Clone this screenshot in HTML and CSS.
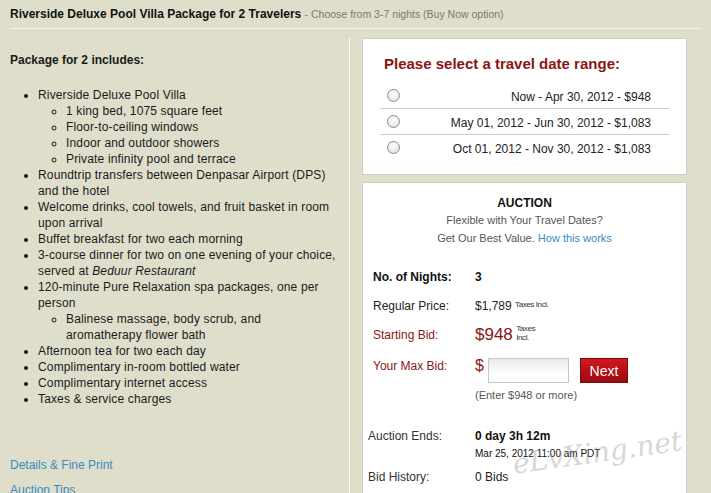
FILE: index.html
```html
<!DOCTYPE html>
<html lang="en">
<head>
    <meta charset="UTF-8">
    <meta name="viewport" content="width=device-width, initial-scale=1.0">
    <title>Riverside Deluxe Pool Villa Package</title>
    <link rel="stylesheet" href="styles.css">
</head>
<body>
    <div class="header">
        <span class="header-title">Riverside Deluxe Pool Villa Package for 2 Travelers</span>
        <span class="header-sub">- Choose from 3-7 nights (Buy Now option)</span>
    </div>

    <div class="main">
        <!-- Package contents -->
        <div class="left-col">
            <h2 class="pkg-title">Package for 2 includes:</h2>
            <ul class="pkg-list">
                <li>Riverside Deluxe Pool Villa
                    <ul>
                        <li>1 king bed, 1075 square feet</li>
                        <li>Floor-to-ceiling windows</li>
                        <li>Indoor and outdoor showers</li>
                        <li>Private infinity pool and terrace</li>
                    </ul>
                </li>
                <li>Roundtrip transfers between Denpasar Airport (DPS) and the hotel</li>
                <li>Welcome drinks, cool towels, and fruit basket in room upon arrival</li>
                <li>Buffet breakfast for two each morning</li>
                <li>3-course dinner for two on one evening of your choice, served at <em>Beduur Restaurant</em></li>
                <li>120-minute Pure Relaxation spa packages, one per person
                    <ul>
                        <li>Balinese massage, body scrub, and aromatherapy flower bath</li>
                    </ul>
                </li>
                <li>Afternoon tea for two each day</li>
                <li>Complimentary in-room bottled water</li>
                <li>Complimentary internet access</li>
                <li>Taxes &amp; service charges</li>
            </ul>

            <a class="side-link first" href="#">Details &amp; Fine Print</a>
            <a class="side-link" href="#">Auction Tips</a>
        </div>

        <div class="right-col">
            <!-- Date ranges (Buy Now) -->
            <div class="box date-box">
                <h3 class="date-title">Please select a travel date range:</h3>
                <label class="date-row">
                    <input type="radio" name="range" class="radio">
                    <span>Now - Apr 30, 2012 - $948</span>
                </label>
                <label class="date-row">
                    <input type="radio" name="range" class="radio">
                    <span>May 01, 2012 - Jun 30, 2012 - $1,083</span>
                </label>
                <label class="date-row">
                    <input type="radio" name="range" class="radio">
                    <span>Oct 01, 2012 - Nov 30, 2012 - $1,083</span>
                </label>
            </div>

            <!-- Auction -->
            <div class="box auction-box">
                <div class="auction-head">AUCTION</div>
                <div class="auction-sub">Flexible with Your Travel Dates?</div>
                <div class="auction-sub">Get Our Best Value. <a href="#">How this works</a></div>

                <div class="field first">
                    <span class="label strong">No. of Nights:</span>
                    <span class="value strong">3</span>
                </div>
                <div class="field">
                    <span class="label">Regular Price:</span>
                    <span class="value">$1,789 <span class="tax">Taxes Incl.</span></span>
                </div>
                <div class="field red">
                    <span class="label">Starting Bid:</span>
                    <span class="value"><span class="big">$948</span> <span class="tax stacked">Taxes<br>Incl.</span></span>
                </div>
                <div class="bid-row red">
                    <span class="label">Your Max Bid:</span>
                    <span class="dollar">$</span>
                    <input type="text" class="bid-input">
                    <button class="next-btn">Next</button>
                </div>
                <div class="hint">(Enter $948 or more)</div>

                <div class="info first">
                    <span class="label">Auction Ends:</span>
                    <span class="value strong">0 day 3h 12m</span>
                </div>
                <div class="ends-date">Mar 25, 2012 11:00 am PDT</div>
                <div class="info bids">
                    <span class="label">Bid History:</span>
                    <span class="value">0 Bids</span>
                </div>
            </div>
        </div>
    </div>

    <div class="watermark">eLvXing.net</div>
</body>
</html>
```

FILE: styles.css
```css
html {
    overflow: hidden;
}

body {
    margin: 0;
    background: #dfdecb;
    font-family: "Liberation Sans", Arial, sans-serif;
    font-size: 12px;
    color: #1a1a1a;
    height: 493px;
    position: relative;
}

a {
    color: #3a8cc0;
    text-decoration: none;
}

/* Top title bar */
.header {
    margin: 0 11px 0 10px;
    padding: 6px 0;
    line-height: 16px;
    border-bottom: 1px solid #f4f3ea;
}

.header-title {
    font-weight: bold;
    color: #111;
}

.header-sub {
    font-size: 10.5px;
    color: #7a7a72;
}

.main {
    display: grid;
    grid-template-columns: 350px 1fr;
    margin-top: 9px;
}

/* Left column: package list */
.left-col {
    border-right: 1px solid #ffffff;
    padding: 14px 12px 0 10px;
    line-height: 16px;
}

.pkg-title {
    font-size: 12px;
    margin: 0;
    line-height: 16px;
}

.pkg-list {
    margin: 19px 0 0;
    padding-left: 28px;
    letter-spacing: 0.15px;
}

.pkg-list ul {
    margin: 0;
    padding-left: 28px;
    list-style: circle;
}

.side-link {
    display: block;
    font-size: 12px;
    margin-top: 9px;
}

.side-link.first {
    margin-top: 50px;
}

/* Right column boxes */
.right-col {
    padding-left: 12px;
    width: 325px;
}

.box {
    background: #ffffff;
    border: 1px solid #cfcfc5;
}

.date-box {
    padding: 16px 17px 14px;
}

.date-title {
    margin: 0 0 10px 4px;
    font-size: 15px;
    line-height: 18px;
    color: #8a1515;
}

.date-row {
    display: flex;
    align-items: center;
    justify-content: space-between;
    height: 25px;
    padding: 0 18px 0 7px;
    border-bottom: 1px solid #cdcdcd;
    font-size: 12px;
    color: #222;
}

.date-row:last-child {
    border-bottom: none;
}

.date-row span {
    padding-top: 2px;
}

.radio {
    -webkit-appearance: none;
    appearance: none;
    width: 13px;
    height: 13px;
    margin: 0;
    border: 1px solid #8c8c8c;
    border-radius: 50%;
    background: radial-gradient(circle at 50% 35%, #ffffff, #dcdcdc);
}

.auction-box {
    margin-top: 7px;
    padding: 12px 0 40px;
    color: #222;
}

.auction-head {
    text-align: center;
    font-weight: bold;
    line-height: 16px;
    color: #111;
}

.auction-sub {
    text-align: center;
    font-size: 11px;
    line-height: 18px;
    color: #555;
}

.field {
    display: flex;
    align-items: center;
    height: 29px;
    padding-left: 10px;
}

.field.first {
    margin-top: 15px;
}

.label {
    width: 102px;
    flex-shrink: 0;
}

.strong {
    font-weight: bold;
    color: #111;
}

.red {
    color: #8a1515;
}

.tax {
    font-size: 8px;
    letter-spacing: -0.4px;
    color: #333;
    display: inline-block;
    vertical-align: 3px;
    line-height: 9px;
}

.tax.stacked {
    vertical-align: 0;
}

.big {
    font-size: 17px;
}

.bid-row {
    display: flex;
    align-items: flex-start;
    margin-top: 9px;
    padding-left: 10px;
    line-height: 16px;
}

.dollar {
    font-size: 16px;
    width: 13px;
}

.bid-input {
    width: 81px;
    height: 25px;
    box-sizing: border-box;
    border: 1px solid #c8c8c8;
    background: linear-gradient(#e9e9e9, #ffffff 70%);
    margin: 0;
}

.next-btn {
    margin-left: 11px;
    width: 48px;
    height: 25px;
    border: 1px solid #7c0a0d;
    background: linear-gradient(#d3161d, #990a0f);
    color: #ffffff;
    font-family: "Liberation Sans", Arial, sans-serif;
    font-size: 14px;
    padding: 0;
}

.hint {
    margin: 4px 0 0 112px;
    font-size: 11px;
    line-height: 16px;
    color: #555;
}

.info {
    display: flex;
    line-height: 16px;
    padding-left: 5px;
}

.info .label {
    width: 107px;
    color: #333;
}

.info.first {
    margin-top: 25px;
}

.ends-date {
    margin: 3px 0 0 112px;
    font-size: 10px;
    line-height: 14px;
    color: #111;
}

.info.bids {
    margin-top: 8px;
}

/* Watermark over the bottom right corner */
.watermark {
    position: absolute;
    left: 512px;
    top: 436px;
    font-family: "DejaVu Serif", serif;
    font-style: italic;
    font-size: 28px;
    color: rgba(150, 150, 150, 0.4);
    transform: rotate(-8deg);
}
```
